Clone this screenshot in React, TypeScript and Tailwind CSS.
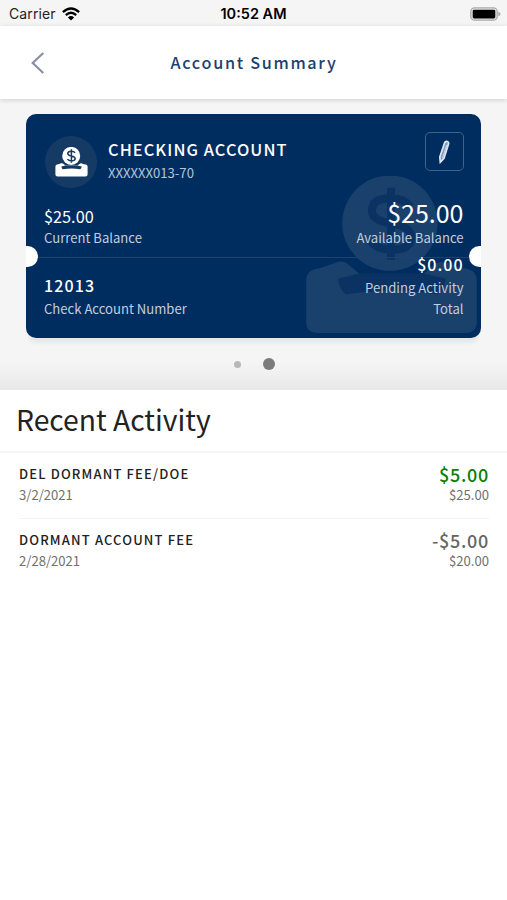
import React from 'react';

interface Transaction {
  title: string;
  date: string;
  amount: string;
  balance: string;
  credit: boolean;
}

const transactions: Transaction[] = [
  { title: 'DEL DORMANT FEE/DOE', date: '3/2/2021', amount: '$5.00', balance: '$25.00', credit: true },
  { title: 'DORMANT ACCOUNT FEE', date: '2/28/2021', amount: '-$5.00', balance: '$20.00', credit: false },
];

interface SavingsIconProps {
  className?: string;
  cutout: string;
}

// Coin dropping into a tray
const SavingsIcon: React.FC<SavingsIconProps> = ({ className, cutout }) => (
  <svg viewBox="0 0 33 30" className={className} fill="none">
    <path
      d="M2 17.6Q4.5 17 6 16.3Q7.5 15.8 8.6 16.9L10.5 18.5H22.5L24.4 16.9Q25.4 15.9 27 16.4Q29 17.2 31 17.6Q32.6 18 32.6 19.8V27.5Q32.6 29.6 30.4 29.6H2.6Q.4 29.6 .4 27.5V19.8Q.4 18 2 17.6Z"
      fill="currentColor"
    />
    <path d="M10.5 18.4L6.4 19.4Q6.8 21.9 8 22.3Q16.5 20.9 25 22.3Q26.2 21.9 26.8 19.4L22.5 18.4Z" fill={cutout} />
    <circle cx="16.2" cy="8.9" r="9" fill="currentColor" />
    <path
      d="M20 5.8Q19 4.2 16.4 4.2Q12.8 4.2 12.8 6.5Q12.8 8.4 16.3 8.9Q20.2 9.5 20.2 11.6Q20.2 13.9 16.6 13.9Q13.6 13.9 12.4 12.1M16.4 2.2V15.8"
      stroke={cutout}
      strokeWidth="1.5"
    />
  </svg>
);

const StatusBar: React.FC = () => (
  <div className="flex h-[26px] items-center justify-between bg-[#f5f5f5] pl-[9px] pr-1.5 pt-px font-['Inter',sans-serif] text-black">
    <div className="flex w-40 items-center gap-1.5 text-sm text-[#222]">
      <span className="tracking-[.1px]">Carrier</span>
      <svg viewBox="0 0 18 14" className="h-3.5 w-[18px]" fill="none" stroke="black" strokeWidth="2.3">
        <path d="M.9 5.1Q9-2.2 17.1 5.1M3.8 8.1Q9 3.4 14.2 8.1" />
        <path d="M9 13.6L5.9 10.4Q9 7.8 12.1 10.4Z" fill="black" stroke="none" />
      </svg>
    </div>
    <span className="text-[14.5px] font-semibold">10:52 AM</span>
    <div className="flex w-[163px] justify-end">
      <svg viewBox="0 0 31 14" className="h-3.5 w-[31px]">
        <rect x=".8" y=".8" width="26.4" height="12.4" rx="3.8" fill="#e6e6e6" stroke="#aaa" strokeWidth="1.3" />
        <rect x="2.7" y="2.7" width="22.6" height="8.8" rx="1.4" fill="black" />
        <path d="M28.3 4.8Q30.5 5.2 30.5 7T28.3 9.2Z" fill="#aaa" />
      </svg>
    </div>
  </div>
);

const Header: React.FC = () => (
  <header className="relative z-10 flex h-[73px] items-center bg-white px-[30px] shadow-[0_1px_5px_rgba(0,0,0,0.16)]">
    <button type="button" aria-label="Back" className="w-4">
      <svg viewBox="0 0 16 24" className="h-6 w-4" fill="none" stroke="#8a90a3" strokeWidth="2.2">
        <path d="M13.3 2L2.7 12L13.3 22" />
      </svg>
    </button>
    <h1 className="flex-1 pr-[15px] text-center text-[16.2px] font-medium tracking-[1.7px] text-[#1d416f]">Account Summary</h1>
  </header>
);

const AccountCard: React.FC = () => (
  <div className="relative h-[224px] overflow-hidden rounded-[10px] bg-[#002d60]">
    <SavingsIcon className="absolute left-[278px] top-[62px] h-[159px] w-[175px] text-[#1a406c]" cutout="#0a3263" />

    <div className="relative flex h-36 flex-col border-b border-[#1c4370] pl-[18px] pr-[17.5px] pt-[18px]">
      <div className="flex items-start">
        <div className="ml-px mt-1 flex h-[52px] w-[52px] items-center justify-center rounded-full bg-[#153b65]">
          <SavingsIcon className="h-[30px] w-[33px] text-white" cutout="#153b65" />
        </div>
        <div className="ml-[11px] flex-1 pt-[5px]">
          <h2 className="text-[16.4px] font-medium leading-6 tracking-[1.05px] text-white">CHECKING ACCOUNT</h2>
          <p className="pt-px text-[13.1px] leading-[22px] text-[#b3c4d9]">XXXXXX013-70</p>
        </div>
        <button type="button" aria-label="Edit" className="flex h-[39px] w-[39px] items-center justify-center rounded-[5px] border border-[#3f618b]">
          <svg viewBox="0 0 12 24" className="h-6 w-3" fill="none" stroke="#dce7f5" strokeWidth="1.7">
            <path d="M6.6 2.7Q7.3.8 9.4 1.5Q11 2.1 10.5 4L6 18.3L2.3 22.2L1.8 17Z" fill="#8299ba" />
            <path d="M8.6 5L4.5 18" strokeWidth=".8" />
          </svg>
        </button>
      </div>
      <div className="mt-[11px] flex items-end justify-between">
        <div>
          <p className="text-[16.3px] leading-6 text-white">$25.00</p>
          <p className="text-[13.1px] leading-5 text-[#c1cede]">Current Balance</p>
        </div>
        <div className="text-right">
          <p className="pb-[3px] text-[25px] leading-[26px] text-white">$25.00</p>
          <p className="text-[13.1px] leading-5 text-[#c1cede]">Available Balance</p>
        </div>
      </div>
    </div>

    <div className="relative flex justify-between pl-[18px] pr-[17.5px]">
      <div className="pt-[15px]">
        <p className="text-[16px] font-medium leading-6 tracking-[1.15px] text-white">12013</p>
        <p className="pt-px text-[13.1px] leading-[22px] text-[#c1cede]">Check Account Number</p>
      </div>
      <div className="w-[110px] text-right">
        <p className="-mt-1 text-[16px] font-medium leading-5 tracking-[1px] text-white">$0.00</p>
        <p className="mt-[3px] text-[13.1px] leading-[21px] text-[#c1cede]">Pending Activity Total</p>
      </div>
    </div>

    {/* ticket notches */}
    <span className="absolute -left-[9px] top-[132px] h-[21px] w-[21px] rounded-full bg-white" />
    <span className="absolute -right-[9px] top-[132px] h-[21px] w-[21px] rounded-full bg-white" />
  </div>
);

const App: React.FC = () => {
  return (
    <div className="flex h-[900px] w-[507px] flex-col overflow-hidden bg-white font-['Noto_Sans_CJK_SC',sans-serif]">
      <StatusBar />
      <Header />

      <section className="h-[291px] bg-[linear-gradient(to_bottom,#f5f5f5_0,#f5f5f5_263px,#e8e8e8_100%)] px-[26px] pt-[15px]">
        <div className="rounded-[10px] shadow-[0_8px_4px_-3px_rgba(0,0,0,0.06)]">
          <AccountCard />
        </div>
        <div className="mt-5 flex h-3 items-center justify-center gap-[22px] pl-0.5">
          <span className="h-[7px] w-[7px] rounded-full bg-[#b8b8b8]" />
          <span className="h-3 w-3 rounded-full bg-[#7b7b7b]" />
        </div>
      </section>

      <main>
        <h2 className="flex h-[63px] items-center border-b-2 border-[#f5f5f5] pb-0.5 pl-4 text-[28.3px] text-[#222]">Recent Activity</h2>
        <ul className="ml-[19px] mr-[18px]">
          {transactions.map(tx => (
            <li key={tx.date} className="flex h-[66px] justify-between border-b border-[#f3f3f3] pt-2.5 last:border-0">
              <div>
                <p className="text-[13px] font-medium leading-[22px] tracking-[1.15px] text-[#222]">{tx.title}</p>
                <p className="text-[13.1px] leading-5 text-[#707070]">{tx.date}</p>
              </div>
              <div className="text-right">
                <p className={`text-[18px] font-medium leading-[22px] tracking-[.7px] ${tx.credit ? 'text-[#088008]' : 'text-[#666]'}`}>{tx.amount}</p>
                <p className="text-[13.1px] leading-5 text-[#707070]">{tx.balance}</p>
              </div>
            </li>
          ))}
        </ul>
      </main>
    </div>
  );
};

export default App;
